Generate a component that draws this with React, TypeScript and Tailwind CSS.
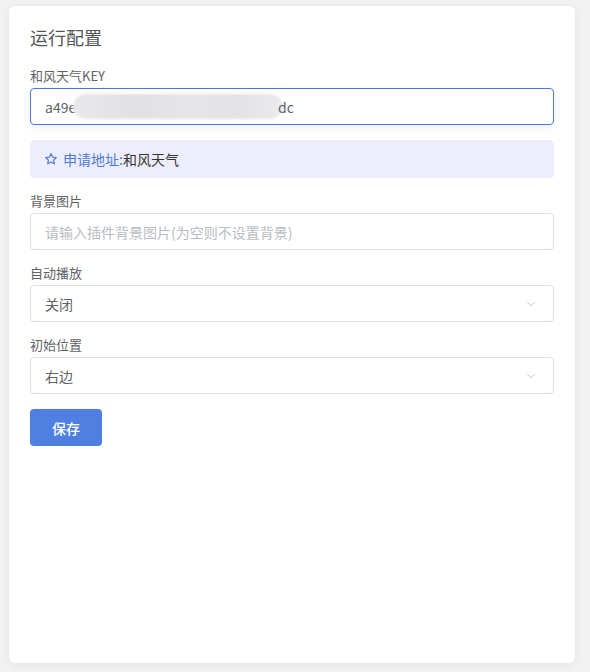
import React from 'react';

const FONT = { fontFamily: '"Noto Sans CJK SC", "Noto Sans", sans-serif' };

const Chevron = () => (
  <svg width="12" height="12" viewBox="0 0 12 12" fill="none" className="text-[#c0c4cc]">
    <path d="M2.5 4.5 6 8l3.5-3.5" stroke="currentColor" strokeWidth="1" strokeLinecap="round" strokeLinejoin="round" />
  </svg>
);

const Star = () => (
  <svg width="14" height="14" viewBox="0 0 24 24" fill="none" className="text-[#4a7bd8]">
    <path
      d="M12 2.8l2.8 5.9 6.4.8-4.7 4.4 1.2 6.4L12 17.2l-5.7 3.1 1.2-6.4-4.7-4.4 6.4-.8z"
      stroke="currentColor"
      strokeWidth="2"
      strokeLinejoin="round"
    />
  </svg>
);

type FieldProps = { label: string; children: React.ReactNode };

const Field: React.FC<FieldProps> = ({ label, children }) => (
  <div className="mb-[13px]">
    <div className="h-5 leading-5 text-[13px] text-[#606266] mb-[2px]">{label}</div>
    {children}
  </div>
);

const Select = ({ value }: { value: string }) => (
  <div className="h-[37px] rounded border border-[#dcdfe6] flex items-center justify-between pl-[14px] pr-[16px] text-sm text-[#606266]">
    <span>{value}</span>
    <Chevron />
  </div>
);

export default function App() {
  return (
    <div className="h-[672px] bg-[#f2f2f2] pt-[6px] pl-[9px]" style={FONT}>
      <div className="w-[566px] h-[657px] rounded-md bg-white shadow-[0_1px_8px_rgba(0,0,0,0.08)] px-[21px] pt-[19px]">
        <div className="text-lg leading-6 text-[#555] mb-[17px]">运行配置</div>

        <div className="h-5 leading-5 text-[13px] text-[#606266] mb-[2px]">和风天气KEY</div>
        <div className="relative h-[37px] rounded border border-[#4a7bd8] shadow-[0_2px_8px_rgba(0,0,0,0.08)] flex items-center pl-[14px] text-sm text-[#606266] overflow-hidden">
          <span>a49e</span>
          <div className="absolute left-[42px] top-[5px] h-[25px] w-[210px] rounded-full bg-[linear-gradient(90deg,#e9e9ec,#e1e1e4_30%,#e6e6e9_55%,#e3e3e6_80%,#ebebee)] blur-[1px]" />
          <span className="absolute left-[247px]">dc</span>
        </div>

        <div className="mt-[15px] h-[38px] rounded bg-[#eeedfc] flex items-center pl-[14px] gap-[5px] text-sm mb-[13px]">
          <Star />
          <span>
            <span className="text-[#4a7bd8]">申请地址:</span>
            <span className="text-[#333]">和风天气</span>
          </span>
        </div>

        <Field label="背景图片">
          <div className="h-[37px] rounded border border-[#dcdfe6] flex items-center pl-[14px] text-sm text-[#b8bcc4]">
            请输入插件背景图片(为空则不设置背景)
          </div>
        </Field>

        <Field label="自动播放">
          <Select value="关闭" />
        </Field>

        <Field label="初始位置">
          <Select value="右边" />
        </Field>

        <button className="mt-[2px] w-[72px] h-[37px] rounded bg-[#4f80e1] text-white text-sm font-medium">
          保存
        </button>
      </div>
    </div>
  );
}
